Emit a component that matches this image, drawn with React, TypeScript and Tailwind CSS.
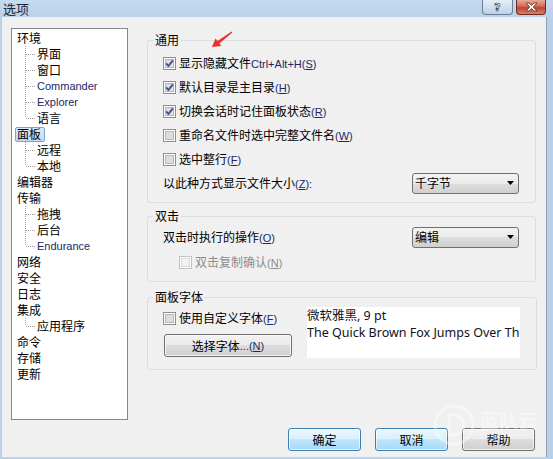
import React from "react";

type Leaf = { label: string; latin?: boolean };
type Node = Leaf & { selected?: boolean; children?: Leaf[] };

const tree: Node[] = [
  {
    label: "环境",
    children: [
      { label: "界面" },
      { label: "窗口" },
      { label: "Commander", latin: true },
      { label: "Explorer", latin: true },
      { label: "语言" },
    ],
  },
  { label: "面板", selected: true, children: [{ label: "远程" }, { label: "本地" }] },
  { label: "编辑器" },
  {
    label: "传输",
    children: [{ label: "拖拽" }, { label: "后台" }, { label: "Endurance", latin: true }],
  },
  { label: "网络" },
  { label: "安全" },
  { label: "日志" },
  { label: "集成", children: [{ label: "应用程序" }] },
  { label: "命令" },
  { label: "存储" },
  { label: "更新" },
];

function Latin({ children }: { children: React.ReactNode }) {
  return (
    <span className="font-['Liberation_Sans',sans-serif] text-[11px] text-[#1d2766]">
      {children}
    </span>
  );
}

// accelerator key like (S) with the letter underlined
function Acc({ k, muted }: { k: string; muted?: boolean }) {
  return (
    <span
      className={`font-['Liberation_Sans',sans-serif] text-[11px] ${
        muted ? "text-[#8d8d8d]" : "text-[#1d2766]"
      }`}
    >
      (<span className="underline underline-offset-[1px]">{k}</span>)
    </span>
  );
}

function CheckBox({ checked, disabled }: { checked?: boolean; disabled?: boolean }) {
  return (
    <svg width="13" height="13" viewBox="0 0 13 13" className="shrink-0">
      <rect
        x="0.5"
        y="0.5"
        width="12"
        height="12"
        fill="#fdfdfd"
        stroke={disabled ? "#c2c2c2" : "#8e8f8f"}
      />
      <rect
        x="2.5"
        y="2.5"
        width="8"
        height="8"
        fill={disabled ? "#f2f2f2" : "#dcdde0"}
        stroke={disabled ? "#dadada" : "#b4b8bd"}
      />
      {checked && (
        <path
          d="M3.2 6.4 L5.4 9 L9.9 3.4"
          fill="none"
          stroke="#354b8c"
          strokeWidth="1.7"
          strokeLinejoin="round"
        />
      )}
    </svg>
  );
}

function CheckRow({
  checked,
  disabled,
  className = "",
  children,
}: {
  checked?: boolean;
  disabled?: boolean;
  className?: string;
  children: React.ReactNode;
}) {
  return (
    <div className={`h-[24px] flex items-center gap-[3px] ${className}`}>
      <CheckBox checked={checked} disabled={disabled} />
      <span className={`whitespace-nowrap ${disabled ? "text-[#8d8d8d]" : ""}`}>{children}</span>
    </div>
  );
}

function Combo({ value }: { value: string }) {
  return (
    <div className="w-[107px] h-[21px] rounded-[3px] border border-[#707070] bg-[linear-gradient(#f3f3f3_0%,#ebebeb_50%,#dedede_50%,#d0d0d0_100%)] flex items-center pl-[2px] pr-[4px]">
      <span className="flex-1">{value}</span>
      <svg width="7" height="4" viewBox="0 0 7 4">
        <polygon points="0,0 7,0 3.5,4" fill="#000" />
      </svg>
    </div>
  );
}

function Group({
  title,
  className,
  children,
}: {
  title: string;
  className: string;
  children: React.ReactNode;
}) {
  return (
    <fieldset className={`w-[389px] border border-[#d5dfe5] rounded-[3px] px-[5px] ${className}`}>
      <legend className="px-[2px] leading-[16px]">{title}</legend>
      <div className="pl-[10px] pr-[11px]">{children}</div>
    </fieldset>
  );
}

// dotted tree connector, 12x16
function Connector({ last }: { last: boolean }) {
  return (
    <svg width="12" height="16" viewBox="0 0 12 16" className="shrink-0">
      <line
        x1="0.5"
        y1="0"
        x2="0.5"
        y2={last ? 8 : 16}
        stroke="#a0a0a0"
        strokeDasharray="1 1"
      />
      <line x1="1" y1="8.5" x2="10" y2="8.5" stroke="#a0a0a0" strokeDasharray="1 1" />
    </svg>
  );
}

function Tree() {
  return (
    <div className="w-[117px] h-[392px] shrink-0 bg-white border border-[#828790] pt-[1px]">
      {tree.map((node) => (
        <div key={node.label}>
          <div className="h-[16px] flex items-center pl-[3px]">
            {node.selected ? (
              <span className="h-[15px] flex items-center pl-[1px] pr-[3px] rounded-[2px] border border-[#7da2ce] bg-linear-to-b from-[#dcebfc] to-[#c1dbfc]">
                {node.label}
              </span>
            ) : (
              <span className="pl-[2px]">{node.label}</span>
            )}
          </div>
          {node.children?.map((c, i) => (
            <div key={c.label} className="h-[16px] flex items-center pl-[13px]">
              <Connector last={i === node.children!.length - 1} />
              {c.latin ? <Latin>{c.label}</Latin> : <span>{c.label}</span>}
            </div>
          ))}
        </div>
      ))}
    </div>
  );
}

function WinButton({
  children,
  blue,
  className = "",
}: {
  children: React.ReactNode;
  blue?: boolean;
  className?: string;
}) {
  return (
    <button
      className={`h-[23px] rounded-[3px] border flex items-center justify-center shadow-[inset_0_0_0_1px_rgba(255,255,255,0.7)] ${
        blue
          ? "border-[#3c7fb1] bg-[linear-gradient(#eaf6fd_0%,#d9f0fc_50%,#bee6fd_50%,#a7d9f5_100%)]"
          : "border-[#707070] bg-[linear-gradient(#f2f2f2_0%,#ebebeb_50%,#dddddd_50%,#cfcfcf_100%)]"
      } ${className}`}
    >
      {children}
    </button>
  );
}

export default function App() {
  return (
    <div className="relative w-[553px] h-[459px] flex flex-col overflow-hidden bg-[#b9d1ea] font-['Noto_Sans_CJK_SC',sans-serif] text-[12px] leading-[16px] text-black">
      {/* title bar */}
      <div className="h-[17px] flex items-start bg-linear-to-b from-[#c6daf0] to-[#b9d1ea]">
        <span className="pl-[3px] pt-[1px] text-[13px] leading-[15px] text-[#1e2530]">选项</span>
        <div className="ml-auto mr-[3px] w-[31px] h-[15px] rounded-b-[4px] border border-t-0 border-[#6c7e97] bg-linear-to-b from-[#e6eef8] to-[#bfd0e6] flex items-center justify-center">
          <span className="font-['DejaVu_Sans',sans-serif] font-bold text-[11px] leading-[13px] text-white [-webkit-text-stroke:0.7px_#2f3f5a]">
            ?
          </span>
        </div>
        <div className="mr-[7px] w-[30px] h-[15px] rounded-b-[4px] border border-t-0 border-[#6d2c22] bg-[linear-gradient(#e9a898_0%,#d26a56_45%,#c2402d_55%,#d9826a_100%)] flex items-center justify-center">
          <svg width="13" height="10" viewBox="0 0 13 10">
            <path
              d="M1 1 H4 L6.5 3.4 L9 1 H12 L8.3 5 L12 9 H9 L6.5 6.6 L4 9 H1 L4.7 5 Z"
              fill="#ffffff"
              stroke="#55261f"
              strokeWidth="0.8"
              strokeLinejoin="round"
            />
          </svg>
        </div>
      </div>

      {/* client */}
      <div className="flex-1 flex pl-[2px] pr-[6px] pb-[2px]">
        <div className="flex-1 flex flex-col bg-[#f0f0f0] border-r border-[#8c9db3] pl-[9px] pt-[11px]">
          <div className="flex">
            <Tree />
            <div className="ml-[19px] mt-[4px] flex flex-col">
              <Group title="通用" className="h-[171px]">
                <div className="mt-[3px]">
                  <CheckRow checked>
                    显示隐藏文件<Latin>Ctrl+Alt+H</Latin>
                    <Acc k="S" />
                  </CheckRow>
                  <CheckRow checked>
                    默认目录是主目录<Acc k="H" />
                  </CheckRow>
                  <CheckRow checked>
                    切换会话时记住面板状态<Acc k="R" />
                  </CheckRow>
                  <CheckRow>
                    重命名文件时选中完整文件名<Acc k="W" />
                  </CheckRow>
                  <CheckRow>
                    选中整行<Acc k="F" />
                  </CheckRow>
                  <div className="h-[24px] flex items-center justify-between">
                    <span>
                      以此种方式显示文件大小<Acc k="Z" />
                      <Latin>:</Latin>
                    </span>
                    <Combo value="千字节" />
                  </div>
                </div>
              </Group>

              <Group title="双击" className="mt-[5px] h-[74px]">
                <div className="mt-[1px] h-[24px] flex items-center justify-between">
                  <span>
                    双击时执行的操作<Acc k="O" />
                  </span>
                  <Combo value="编辑" />
                </div>
                <CheckRow disabled className="mt-[1px] ml-[16px]">
                  双击复制确认<Acc k="N" muted />
                </CheckRow>
              </Group>

              <Group title="面板字体" className="mt-[7px] h-[81px]">
                <div className="mt-[1px] flex">
                  <div className="w-[144px] shrink-0">
                    <CheckRow>
                      使用自定义字体<Acc k="F" />
                    </CheckRow>
                    <WinButton className="mt-[4px] ml-[1px] w-[128px]">
                      选择字体<Latin>...</Latin>
                      <Acc k="N" />
                    </WinButton>
                  </div>
                  <div className="mt-[1px] w-[213px] h-[51px] shrink-0 bg-white overflow-hidden whitespace-nowrap font-['Noto_Sans','Noto_Sans_CJK_SC',sans-serif] text-[12.5px] leading-[17px] text-[#111122]">
                    <div>微软雅黑, 9 pt</div>
                    <div>The Quick Brown Fox Jumps Over The Lazy Dog</div>
                  </div>
                </div>
              </Group>
            </div>
          </div>

          <div className="mt-[8px] flex justify-end gap-[14px] pr-[11px]">
            <WinButton blue className="w-[73px]">
              确定
            </WinButton>
            <WinButton blue className="w-[73px]">
              取消
            </WinButton>
            <WinButton className="w-[73px]">帮助</WinButton>
          </div>
        </div>
      </div>

      {/* red annotation arrow */}
      <svg
        className="absolute left-[205px] top-[28px] pointer-events-none"
        width="32"
        height="22"
        viewBox="205 28 32 22"
      >
        <polygon
          points="231.6,31.4 217.5,41 215.5,38.4 212,47 221.3,46 219.4,43.5 232.4,32.6"
          fill="#e8322b"
        />
      </svg>

      {/* faint watermark */}
      <div className="absolute left-[432px] top-[403px] flex items-center gap-[4px] opacity-40 pointer-events-none">
        <svg width="44" height="44" viewBox="0 0 44 44">
          <circle cx="22" cy="22" r="19" fill="none" stroke="#ffffff" strokeWidth="3" />
          <path d="M17 12 V32 H22 A10 10 0 0 0 22 12 Z" fill="none" stroke="#ffffff" strokeWidth="3" />
        </svg>
        <div className="flex flex-col">
          <span className="text-[19px] leading-[22px] font-bold text-white">蓝队云</span>
          <span className="font-['Liberation_Sans',sans-serif] text-[9px] leading-[10px] text-white">
            Landui.com
          </span>
        </div>
      </div>
    </div>
  );
}
